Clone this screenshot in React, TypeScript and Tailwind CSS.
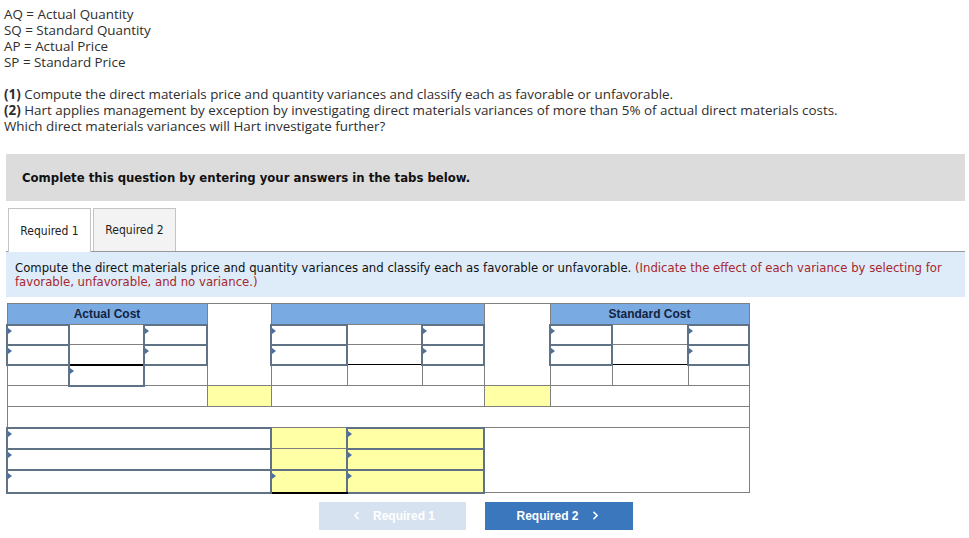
import { ChevronLeft, ChevronRight } from "lucide-react";

const tahoma = { fontFamily: '"DejaVu Sans Condensed", "DejaVu Sans", sans-serif' };

function Marker() {
  return (
    <span className="absolute left-0 top-[2px] h-0 w-0 border-y-[3px] border-l-[4px] border-y-transparent border-l-[#4d6f9c]" />
  );
}

const base = "border border-[#808080] p-0";
const input = "relative border-2 border-[#5f7286] p-0";
const blue = "bg-[#79aae1]";
const yellow = "bg-[#ffffa6]";

function VarianceTable() {
  const widths = [62, 75, 63, 64, 76, 75, 62, 66, 62, 76, 61];
  return (
    <table
      className="ml-[6px] table-fixed border-collapse border border-[#808080]"
      style={{ width: 742, fontFamily: '"Liberation Sans", Arial, sans-serif' }}
    >
      <colgroup>
        {widths.map((w, i) => (
          <col key={i} style={{ width: w }} />
        ))}
      </colgroup>
      <tbody>
        <tr className="h-[21px]">
          <td colSpan={3} className={`${base} ${blue} text-center text-[12px] font-bold text-[#13233f]`}>
            Actual Cost
          </td>
          <td rowSpan={4} className={`${base} bg-white`} />
          <td colSpan={3} className={`${base} ${blue}`} />
          <td rowSpan={4} className={`${base} bg-white`} />
          <td colSpan={3} className={`${base} ${blue} text-center text-[12px] font-bold text-[#13233f]`}>
            Standard Cost
          </td>
        </tr>
        {[0, 1].map((r) => (
          <tr key={r} className="h-[20px]">
            <td className={input}><Marker /></td>
            <td className={`${base} ${r === 1 ? "border-b-black" : ""}`} />
            <td className={input}><Marker /></td>
            <td className={input}><Marker /></td>
            <td className={`${base} ${r === 1 ? "border-b-black" : ""}`} />
            <td className={input}><Marker /></td>
            <td className={input}><Marker /></td>
            <td className={`${base} ${r === 1 ? "border-b-black" : ""}`} />
            <td className={input}><Marker /></td>
          </tr>
        ))}
        <tr className="h-[21px]">
          <td className={base} />
          <td className={`${input} border-t-black`}><Marker /></td>
          <td className={base} />
          <td className={base} />
          <td className={base} />
          <td className={base} />
          <td className={base} />
          <td className={base} />
          <td className={base} />
        </tr>
        <tr className="h-[21px]">
          <td colSpan={3} className={base} />
          <td className={`${base} ${yellow}`} />
          <td colSpan={3} className={base} />
          <td className={`${base} ${yellow}`} />
          <td colSpan={3} className={base} />
        </tr>
        <tr className="h-[21px]">
          <td colSpan={11} className={base} />
        </tr>
        <tr className="h-[21px]">
          <td colSpan={4} className={input}><Marker /></td>
          <td className={`${base} ${yellow}`} />
          <td colSpan={2} className={`${input} ${yellow}`}><Marker /></td>
          <td colSpan={4} rowSpan={3} className={base} />
        </tr>
        <tr className="h-[21px]">
          <td colSpan={4} className={input}><Marker /></td>
          <td className={`${base} ${yellow}`} />
          <td colSpan={2} className={`${input} ${yellow}`}><Marker /></td>
        </tr>
        <tr className="h-[23px]">
          <td colSpan={4} className={input}><Marker /></td>
          <td className={`${input} ${yellow} border-b-black`}><Marker /></td>
          <td colSpan={2} className={`${input} ${yellow}`}><Marker /></td>
        </tr>
      </tbody>
    </table>
  );
}

export default function App() {
  return (
    <div className="h-[538px] w-[969px] overflow-hidden bg-white">
      <div
        className="pl-[4px] pt-[6px] text-[13.4px] leading-[16px] text-[#2e2e2e]"
        style={{ fontFamily: '"Open Sans", sans-serif' }}
      >
        <p>AQ = Actual Quantity</p>
        <p>SQ = Standard Quantity</p>
        <p>AP = Actual Price</p>
        <p>SP = Standard Price</p>
        <p className="mt-[16px]">
          <b>(1)</b> Compute the direct materials price and quantity variances and classify each as favorable or
          unfavorable.
        </p>
        <p>
          <b>(2)</b> Hart applies management by exception by investigating direct materials variances of more than 5%
          of actual direct materials costs.
        </p>
        <p>Which direct materials variances will Hart investigate further?</p>
      </div>

      <div
        className="ml-[6px] mt-[20px] flex h-[47px] w-[959px] items-center bg-[#dcdcdc] pl-[16px] text-[13px] font-bold text-[#111]"
        style={tahoma}
      >
        Complete this question by entering your answers in the tabs below.
      </div>

      <div className="ml-[6px] mt-[7px] w-[959px]" style={tahoma}>
        <div className="flex items-start text-[12px] text-[#222]">
          <div className="relative z-10 ml-[2px] -mb-px flex h-[44px] w-[83px] items-center justify-center border border-b-0 border-[#c4c4c4] bg-white">
            Required 1
          </div>
          <div className="ml-[2px] flex h-[43px] w-[83px] items-center justify-center border border-b-0 border-[#c4c4c4] bg-[#f3f3f3]">
            Required 2
          </div>
        </div>
        <div
          className="h-[46px] border-t border-[#999] bg-[#ddecf8] px-[9px] pt-[9px] text-[11.7px] leading-[14px] text-[#111]"
          style={{ fontFamily: '"DejaVu Sans", sans-serif' }}
        >
          Compute the direct materials price and quantity variances and classify each as favorable or unfavorable.{" "}
          <span className="text-[#a8262e]">
            (Indicate the effect of each variance by selecting for favorable, unfavorable, and no variance.)
          </span>
        </div>
      </div>

      <div className="mt-[6px]">
        <VarianceTable />
      </div>

      <div
        className="mt-[8px] flex w-[952px] justify-center gap-[19px] text-[12px] font-bold text-white"
        style={{ fontFamily: '"Liberation Sans", Arial, sans-serif' }}
      >
        <button className="flex h-[28px] w-[147px] items-center justify-center gap-[10px] bg-[#d6e2ef]">
          <ChevronLeft size={13} strokeWidth={3} />
          Required 1
        </button>
        <button className="flex h-[28px] w-[148px] items-center justify-center gap-[10px] bg-[#3a77bd]">
          Required 2
          <ChevronRight size={13} strokeWidth={3} />
        </button>
      </div>
    </div>
  );
}
